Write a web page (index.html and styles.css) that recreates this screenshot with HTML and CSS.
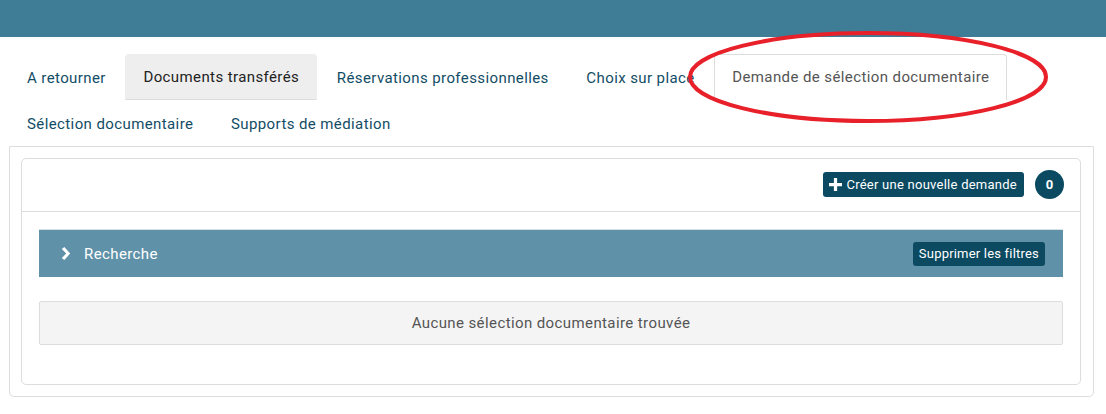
FILE: index.html
```html
<!DOCTYPE html>
<html lang="fr">
<head>
<meta charset="utf-8">
<title>Sélection documentaire</title>
<link rel="stylesheet" href="styles.css">
</head>
<body>
<header class="topbar"></header>
<nav class="tabs">
  <a class="tab">A retourner</a>
  <a class="tab tab-active">Documents transférés</a>
  <a class="tab">Réservations professionnelles</a>
  <a class="tab">Choix sur place</a>
  <a class="tab tab-current">Demande de sélection documentaire</a>
  <a class="tab">Sélection documentaire</a>
  <a class="tab">Supports de médiation</a>
</nav>
<svg class="annot" width="372" height="100" viewBox="0 0 372 100" aria-hidden="true">
  <ellipse cx="186" cy="50" rx="178" ry="44" fill="none" stroke="#e8202a" stroke-width="4"/>
</svg>
<section class="outer">
  <div class="inner">
    <div class="inner-head">
      <button class="btn btn-create"><svg class="plus" width="13" height="13" viewBox="0 0 12 12"><path d="M4.5 0h3v4.5H12v3H7.5V12h-3V7.5H0v-3h4.5z" fill="#fff"/></svg>Créer une nouvelle demande</button>
      <span class="badge">0</span>
    </div>
    <div class="inner-body">
      <div class="search-bar">
        <div class="search-title"><svg class="chev" width="10" height="13" viewBox="0 0 10 13"><path d="M0.8 2 L3.3 0 L9.2 6.5 L3.3 13 L0.8 11 L5.2 6.5 Z" fill="#fff"/></svg>Recherche</div>
        <button class="btn btn-clear">Supprimer les filtres</button>
      </div>
      <div class="empty">Aucune sélection documentaire trouvée</div>
    </div>
  </div>
</section>
</body>
</html>
```
FILE: styles.css
```css
* { box-sizing: border-box; }
html, body { margin: 0; padding: 0; background: #fff; }
body {
  font-family: Roboto, "Liberation Sans", Arial, sans-serif;
  color: #333;
  position: relative;
  width: 1106px;
  height: 414px;
  overflow: hidden;
}
.topbar {
  height: 37px;
  background: #3f7c95;
}
.tabs {
  display: flex;
  flex-wrap: wrap;
  margin-top: 17px;
  padding-left: 9px;
  padding-right: 8px;
}
.tab {
  display: block;
  font-size: 15px;
  letter-spacing: 0.4px;
  line-height: 20px;
  padding: 13px 17px;
  height: 46px;
  margin-right: 1.6px;
  color: #124d66;
  border: 1px solid transparent;
  border-bottom: none;
  border-radius: 4px 4px 0 0;
  white-space: nowrap;
}
.tab-active {
  background: #eee;
  color: #222;
  border-bottom: 1px solid #ddd;
  padding-top: 12px;
  padding-bottom: 12px;
}
.tab-current {
  background: #fff;
  color: #555;
  border-color: #ddd;
  padding-top: 12px;
}
.annot {
  position: absolute;
  left: 682px;
  top: 27px;
}
.outer {
  margin: 0 12px 0 9px;
  border: 1px solid #ddd;
  border-radius: 0 0 5px 5px;
  padding: 11px 12px 11px 11px;
}
.inner {
  border: 1px solid #ddd;
  border-radius: 5px;
}
.inner-head {
  display: flex;
  justify-content: flex-end;
  align-items: center;
  height: 53px;
  padding-right: 16px;
  padding-bottom: 1px;
  border-bottom: 1px solid #ddd;
}
.btn {
  font-family: Roboto, "Liberation Sans", Arial, sans-serif;
  border: none;
  color: #fff;
  background: #0b4a61;
  border-radius: 3px;
  font-size: 13px;
  cursor: pointer;
}
.btn-create {
  display: flex;
  align-items: center;
  height: 25px;
  padding: 0 7px 0 6px;
  margin-right: 11px;
  letter-spacing: 0.25px;
}
.plus { margin-right: 4px; }
.badge {
  width: 29px;
  height: 29px;
  border-radius: 50%;
  background: #0b4a61;
  color: #fff;
  font-weight: bold;
  font-size: 13px;
  display: flex;
  align-items: center;
  justify-content: center;
}
.inner-body {
  padding: 17px 17px 39px 17px;
}
.search-bar {
  height: 48px;
  background: #5f91a8;
  border-top: 1px solid #d6e0e5;
  display: flex;
  align-items: center;
  justify-content: space-between;
  padding: 0 18px 0 22px;
}
.search-title {
  display: flex;
  align-items: center;
  color: #fff;
  font-size: 15px;
  letter-spacing: 0.4px;
}
.chev { margin-right: 13px; }
.btn-clear {
  height: 24px;
  padding: 0 6px;
  letter-spacing: 0.2px;
}
.empty {
  margin-top: 24px;
  height: 44px;
  background: #f4f4f4;
  border: 1px solid #ddd;
  border-radius: 2px;
  display: flex;
  align-items: center;
  justify-content: center;
  font-size: 15px;
  letter-spacing: 0.4px;
  color: #555;
}
```
